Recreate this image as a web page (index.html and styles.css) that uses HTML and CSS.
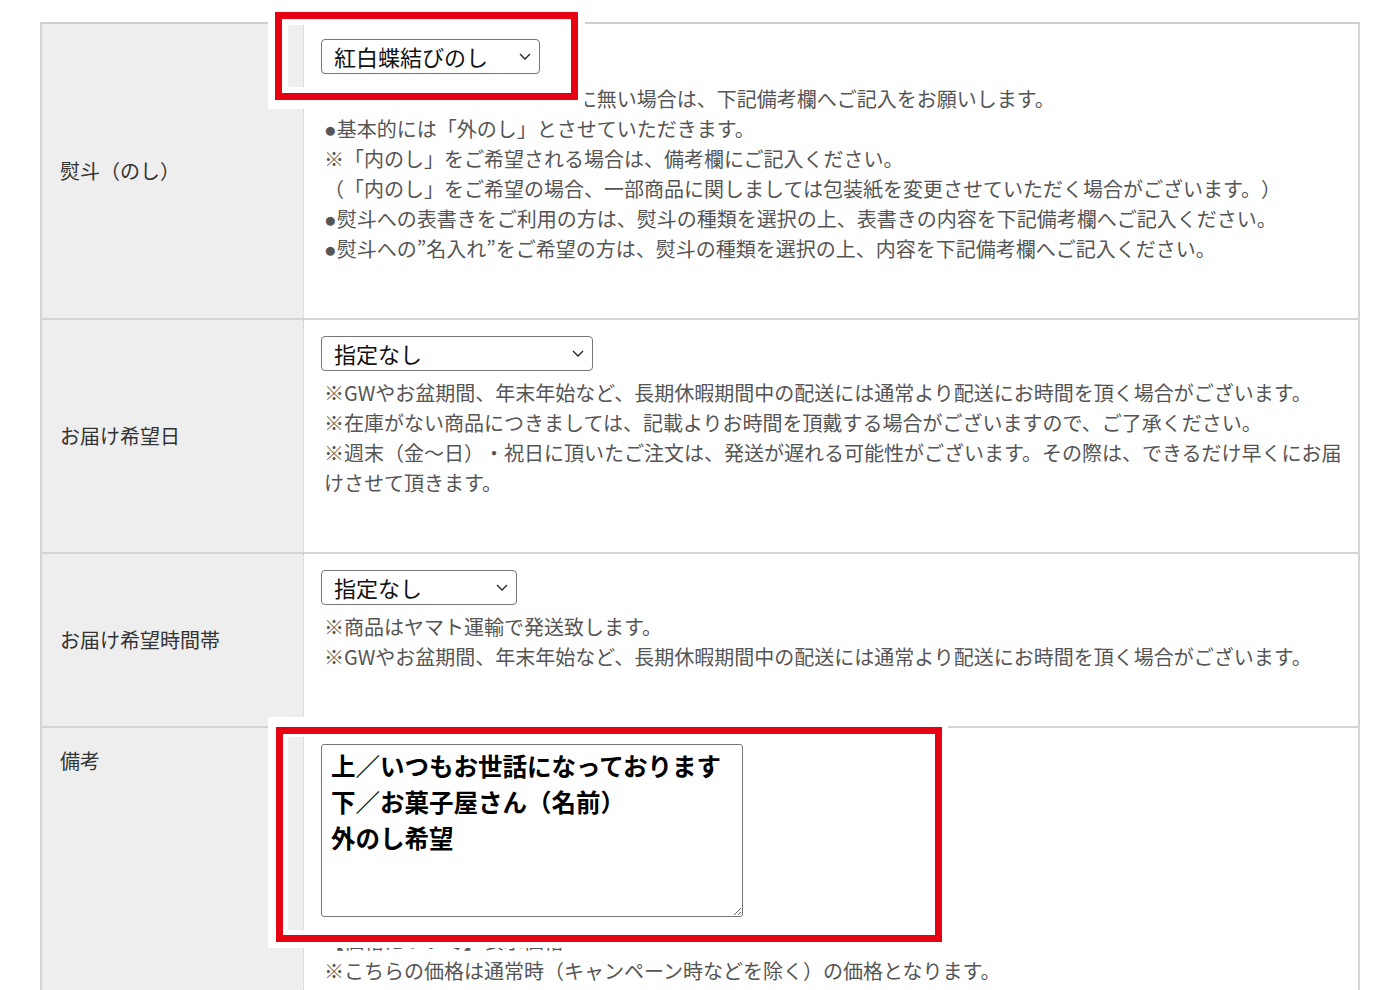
FILE: index.html
```html
<!DOCTYPE html>
<html lang="ja">
<head>
<meta charset="utf-8">
<title>ご注文フォーム</title>
<link rel="stylesheet" href="styles.css">
</head>
<body>
<div class="form">
  <div class="row">
    <div class="label label-middle">熨斗（のし）</div>
    <div class="field field-first">
      <div class="select select-noshi"><span>紅白蝶結びのし</span><svg class="chev" viewBox="0 0 12 7" width="12" height="7"><path d="M1 1l5 5 5-5" fill="none" stroke="#222" stroke-width="1.3"/></svg></div>
      <p class="note"><span class="dot">●</span>熨斗の種類が上記の選択肢に無い場合は、下記備考欄へご記入をお願いします。<br>
      <span class="dot">●</span>基本的には「外のし」とさせていただきます。<br>
      ※「内のし」をご希望される場合は、備考欄にご記入ください。<br>
      （「内のし」をご希望の場合、一部商品に関しましては包装紙を変更させていただく場合がございます。）<br>
      <span class="dot">●</span>熨斗への表書きをご利用の方は、熨斗の種類を選択の上、表書きの内容を下記備考欄へご記入ください。<br>
      <span class="dot">●</span>熨斗への”名入れ”をご希望の方は、熨斗の種類を選択の上、内容を下記備考欄へご記入ください。</p>
    </div>
  </div>
  <div class="row">
    <div class="label label-middle">お届け希望日</div>
    <div class="field">
      <div class="select select-date"><span>指定なし</span><svg class="chev" viewBox="0 0 12 7" width="12" height="7"><path d="M1 1l5 5 5-5" fill="none" stroke="#222" stroke-width="1.3"/></svg></div>
      <p class="note">※GWやお盆期間、年末年始など、長期休暇期間中の配送には通常より配送にお時間を頂く場合がございます。<br>
      ※在庫がない商品につきましては、記載よりお時間を頂戴する場合がございますので、ご了承ください。<br>
      ※週末（金〜日）・祝日に頂いたご注文は、発送が遅れる可能性がございます。その際は、できるだけ早くにお届けさせて頂きます。</p>
    </div>
  </div>
  <div class="row">
    <div class="label label-middle">お届け希望時間帯</div>
    <div class="field">
      <div class="select select-time"><span>指定なし</span><svg class="chev" viewBox="0 0 12 7" width="12" height="7"><path d="M1 1l5 5 5-5" fill="none" stroke="#222" stroke-width="1.3"/></svg></div>
      <p class="note">※商品はヤマト運輸で発送致します。<br>
      ※GWやお盆期間、年末年始など、長期休暇期間中の配送には通常より配送にお時間を頂く場合がございます。</p>
    </div>
  </div>
  <div class="row row-last">
    <div class="label label-top">備考</div>
    <div class="field">
      <div class="textarea-box"></div>
      <p class="note">【価格について】表示価格<br>
      ※こちらの価格は通常時（キャンペーン時などを除く）の価格となります。</p>
    </div>
  </div>

  <div class="callout callout-noshi">
    <div class="frame">
      <div class="strip"></div>
      <div class="select select-noshi callout-select"><span>紅白蝶結びのし</span><svg class="chev" viewBox="0 0 12 7" width="12" height="7"><path d="M1 1l5 5 5-5" fill="none" stroke="#222" stroke-width="1.3"/></svg></div>
    </div>
  </div>

  <div class="callout callout-memo">
    <div class="frame frame-memo">
      <div class="strip"></div>
      <textarea class="memo" readonly>上／いつもお世話になっております
下／お菓子屋さん（名前）
外のし希望</textarea>
    </div>
  </div>
</div>
</body>
</html>
```
FILE: styles.css
```css
* { box-sizing: border-box; }
html, body { margin: 0; padding: 0; background: #fff; }
body {
  font-family: "Noto Sans CJK JP", "Noto Sans", sans-serif;
  overflow: hidden;
  height: 990px;
}
.form {
  position: relative;
  margin: 22px 0 0 40px;
  width: 1320px;
  border-top: 2px solid #cfcfcf;
  border-left: 2px solid #d4d4d4;
  border-right: 2px solid #d4d4d4;
}
.row {
  display: grid;
  grid-template-columns: 262px 1fr;
  border-bottom: 2px solid #d4d4d4;
}
.row-last { border-bottom: none; }
.label {
  background: #eeeeee;
  border-right: 1px dotted #cccccc;
  color: #333;
  font-size: 20px;
  line-height: 30px;
  padding: 0 10px 0 18px;
}
.label-middle { display: flex; align-items: center; }
.label-top { padding-top: 18px; }
.field {
  padding: 16px 12px 54px 17px;
  min-width: 0;
}
.field-first .select { margin-bottom: 9px; }
.row-last .field { padding-bottom: 20px; }
.select {
  display: flex;
  align-items: center;
  justify-content: space-between;
  height: 35px;
  border: 1px solid #767676;
  border-radius: 4px;
  background: #fff;
  color: #111;
  font-size: 22px;
  line-height: 1;
  padding: 0 8px 2px 12px;
  margin-bottom: 7px;
}
.select-noshi { width: 219px; }
.select-date { width: 272px; }
.select-time { width: 196px; }
.chev { flex: none; margin-top: 2px; }
.note {
  margin: 0 0 0 3px;
  color: #555;
  font-size: 20px;
  line-height: 30px;
  text-spacing-trim: space-all;
}
.dot {
  font-family: "Liberation Sans", sans-serif;
  font-size: 21px;
  line-height: 0;
}
.textarea-box {
  width: 422px;
  height: 175px;
  margin-bottom: 7px;
}

/* annotation callouts */
.callout {
  position: absolute;
  background: #fff;
}
.callout-noshi {
  left: 226px;
  top: -20px;
  width: 317px;
  height: 105px;
  padding: 8px 7px 9px 7px;
}
.callout-memo {
  left: 226px;
  top: 693px;
  width: 680px;
  height: 231px;
  padding: 10px 6px 6px 8px;
}
.frame {
  display: flex;
  align-items: flex-start;
  height: 100%;
  border: 7px solid #e60012;
  padding: 6px;
}
.frame-memo {
  padding: 3px 6px 5px 5px;
}
.strip {
  width: 16px;
  align-self: stretch;
  background: #eeeeee;
  border-right: 1px dotted #cccccc;
  flex: none;
}
.callout-select {
  margin: 14px 0 0 17px;
}
.memo {
  margin: 7px 0 0 17px;
  width: 422px;
  height: 173px;
  border: 1px solid #767676;
  border-radius: 3px;
  padding: 3px 9px;
  font-family: "Noto Sans CJK JP", sans-serif;
  font-weight: 700;
  font-size: 24.5px;
  line-height: 36px;
  color: #000;
  background: #fff;
  resize: both;
  overflow: hidden;
  outline: none;
}
```
